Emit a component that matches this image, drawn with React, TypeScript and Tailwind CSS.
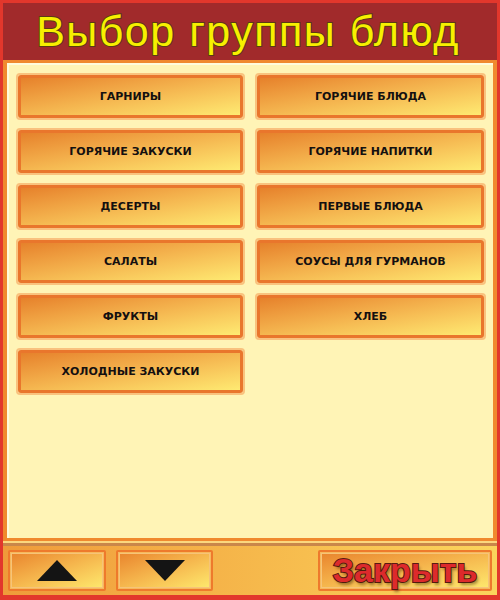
import React from "react";

const left = ["ГАРНИРЫ", "ГОРЯЧИЕ ЗАКУСКИ", "ДЕСЕРТЫ", "САЛАТЫ", "ФРУКТЫ", "ХОЛОДНЫЕ ЗАКУСКИ"];
const right = ["ГОРЯЧИЕ БЛЮДА", "ГОРЯЧИЕ НАПИТКИ", "ПЕРВЫЕ БЛЮДА", "СОУСЫ ДЛЯ ГУРМАНОВ", "ХЛЕБ"];

function Btn({ label }: { label: string }) {
  return (
    <div className="h-[47px] rounded-[4px] border-2 border-[#f9c27e] p-0">
      <div className="h-full rounded-[3px] border-[3px] border-[#e9762c] bg-linear-to-br from-[#e6812b] to-[#feea72] flex items-center justify-center">
        <span className="pt-[2px] text-[11px] font-bold text-[#141010] font-['DejaVu_Sans',sans-serif]">
          {label}
        </span>
      </div>
    </div>
  );
}

export default function App() {
  const items: string[] = [];
  for (let i = 0; i < 6; i++) {
    items.push(left[i]);
    items.push(right[i] ?? "");
  }
  return (
    <div className="w-[500px] h-[600px] bg-[#e2372c] pt-[3px] px-[3px] pb-[5px] flex flex-col">
      <div className="h-[57px] bg-[#a12a2b] flex items-center justify-center">
        <span className="text-[43px] leading-none tracking-[1.5px] text-[#f7f000] font-['Liberation_Sans',sans-serif] [paint-order:stroke_fill] [-webkit-text-stroke:2px_#5b3b12] pr-[4px]">
          Выбор группы блюд
        </span>
      </div>
      <div className="flex-1 bg-[#f0892e] pt-[3px] px-[4px] pb-[3px] flex flex-col">
        <div className="flex-1 bg-[#fff4b6] border-t-2 border-l-2 border-[#fffbdc] pt-[8px] pl-[7px] pr-[4px]">
          <div className="grid grid-cols-[229px_231px] gap-x-[10px] gap-y-[8px]">
            {items.map((t, i) => (t ? <Btn key={i} label={t} /> : <div key={i} />))}
          </div>
        </div>
      </div>
      <div className="h-[2px] bg-[#fbd77e]" />
      <div className="h-[3px] bg-[#c9874a]" />
      <div className="h-[49px] bg-linear-to-r from-[#ef9b3a] to-[#fbd45c] flex items-center px-[5px] pb-[1px]">
        <div className="w-[98px] h-[41px] rounded-[2px] border-2 border-[#ee7a2c] p-[1px] bg-[#f7b85c]">
          <div className="h-full border border-[#f6c478] bg-linear-to-br from-[#e9862e] to-[#fde76c] flex items-center justify-center">
            <svg width="40" height="21" viewBox="0 0 40 21">
              <polygon points="20,0 40,21 0,21" fill="#141414" />
            </svg>
          </div>
        </div>
        <div className="w-[97px] h-[41px] ml-[10px] rounded-[2px] border-2 border-[#ee7a2c] p-[1px] bg-[#f7b85c]">
          <div className="h-full border border-[#f6c478] bg-linear-to-br from-[#e9862e] to-[#fde76c] flex items-center justify-center">
            <svg width="40" height="21" viewBox="0 0 40 21">
              <polygon points="0,0 40,0 20,21" fill="#141414" />
            </svg>
          </div>
        </div>
        <div className="ml-auto w-[174px] h-[41px] rounded-[2px] border-2 border-[#ee7a2c] p-[1px] bg-[#f7b85c]">
          <div className="h-full border border-[#f6c478] bg-linear-to-br from-[#e9862e] to-[#fde76c] flex items-center justify-center">
            <span className="text-[34px] leading-none font-bold text-[#dd2a2c] font-['Liberation_Sans',sans-serif] [paint-order:stroke_fill] [-webkit-text-stroke:2px_#5a1a12] [text-shadow:2px_3px_3px_rgba(60,30,0,0.45)]">
              Закрыть
            </span>
          </div>
        </div>
      </div>
    </div>
  );
}
